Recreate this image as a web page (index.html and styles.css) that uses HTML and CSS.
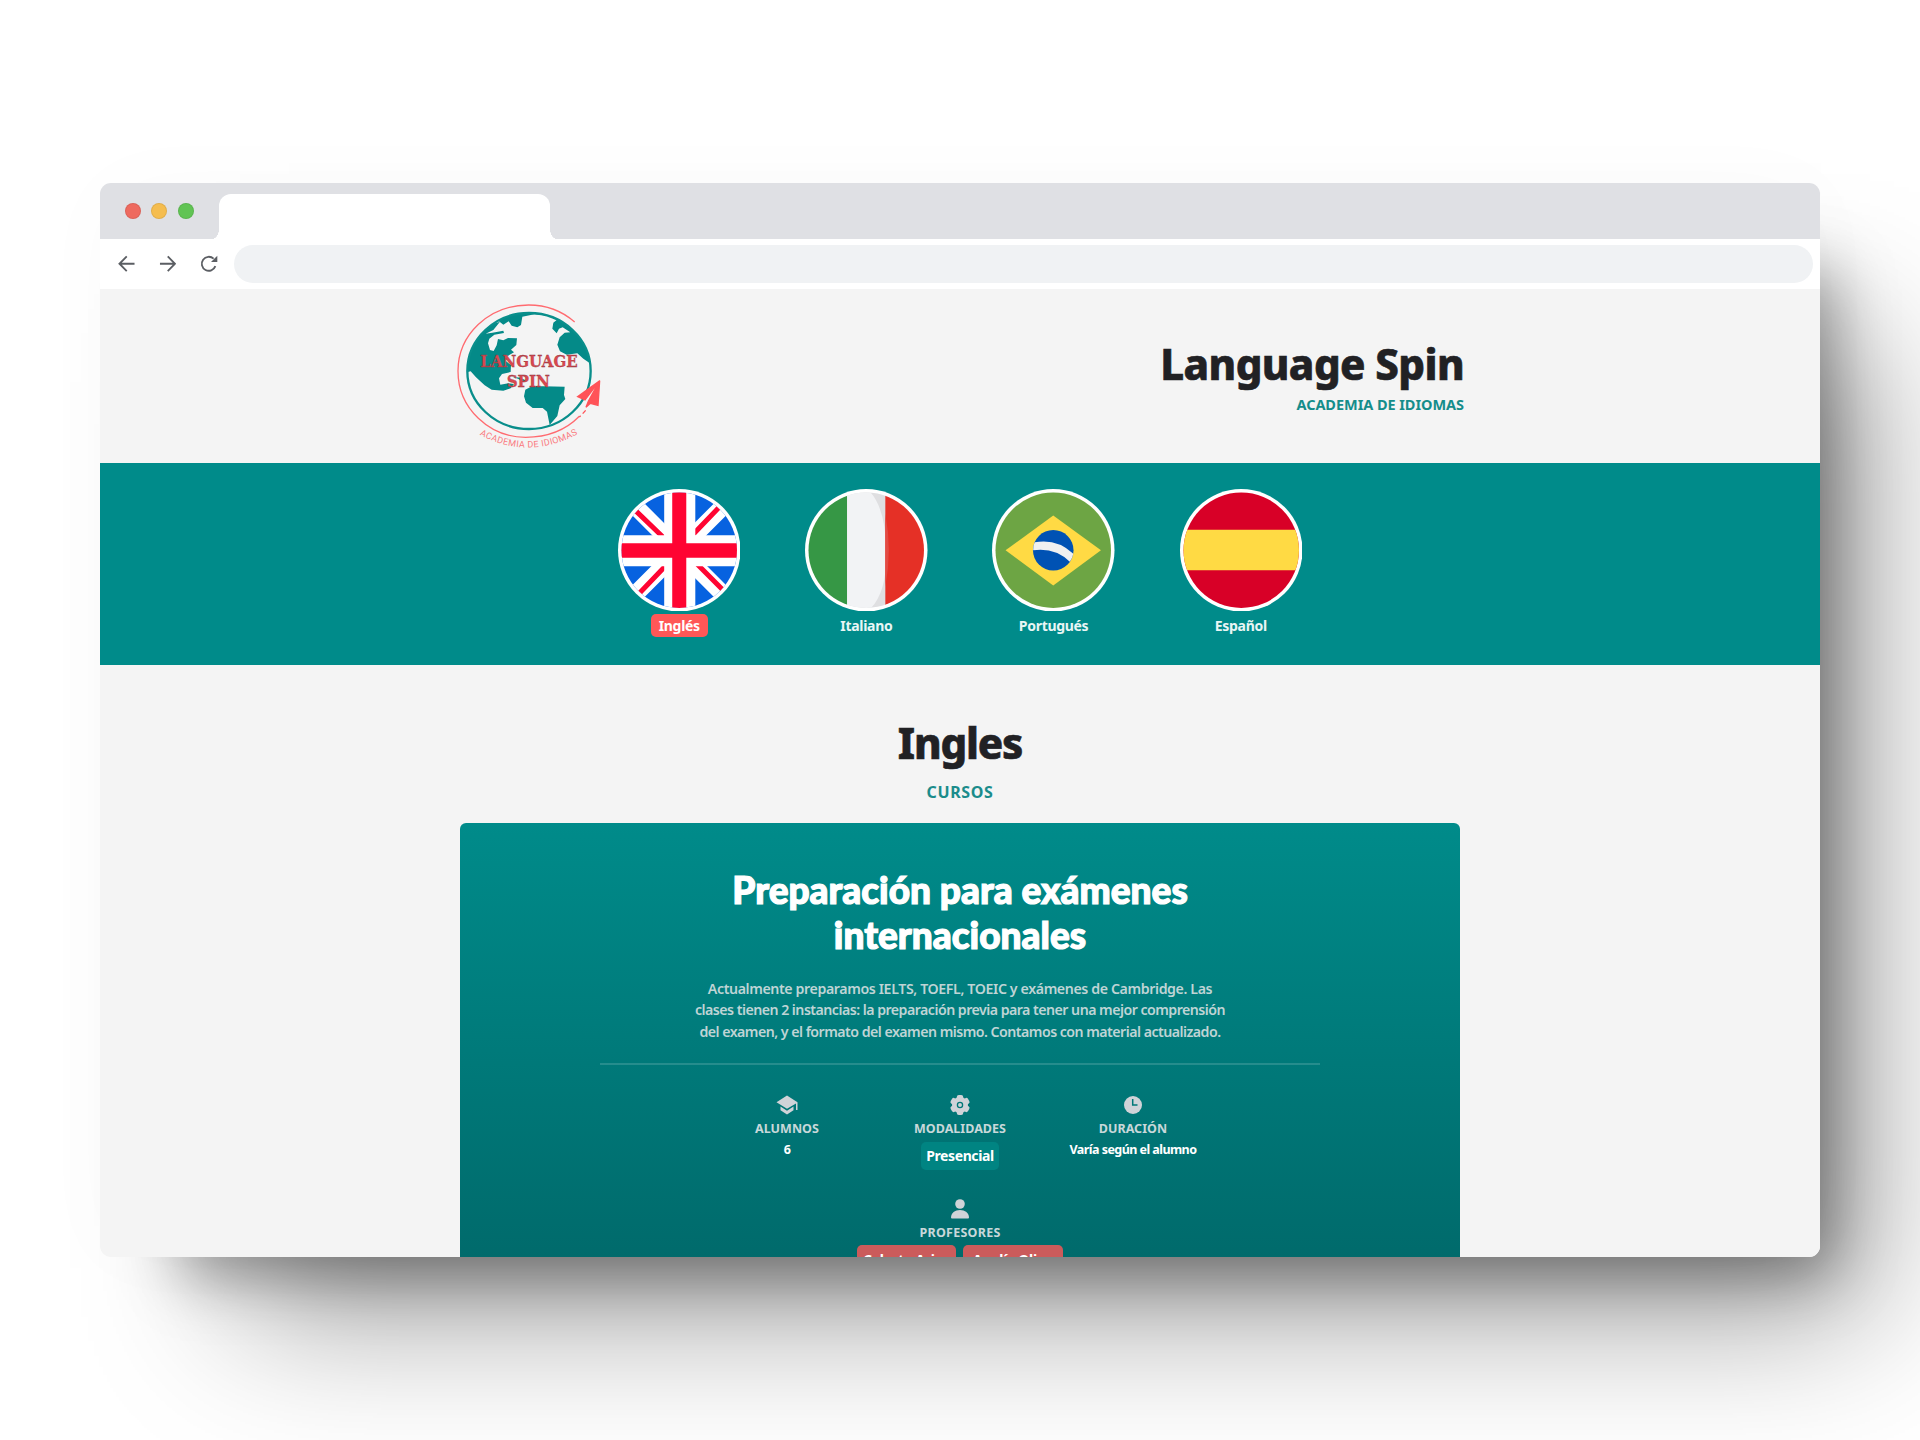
FILE: index.html
```html
<!DOCTYPE html>
<html lang="es">
<head>
<meta charset="utf-8">
<title>Language Spin</title>
<link rel="stylesheet" href="styles.css">
</head>
<body>
<div class="window">
  <div class="tabstrip">
    <div class="lights"><i class="light red"></i><i class="light amber"></i><i class="light green"></i></div>
    <div class="tab"></div>
  </div>
  <div class="toolbar">
    <svg class="tool" viewBox="0 0 18 18"><path d="M17 9H2M9 1.500L1.500 9 9 16.500"/></svg>
    <svg class="tool" viewBox="0 0 18 18"><path d="M1 9h15M9 1.500L16.500 9 9 16.500"/></svg>
    <svg class="tool" viewBox="0 0 18 18"><path d="M15.800 11.500A7.200 7.200 0 1 1 14 3.800"/><path class="solid" d="M17.800 .7v6.500h-6.500z"/></svg>
    <div class="address"></div>
  </div>
  <div class="page">
    <header class="header">
      <svg class="logo" viewBox="0 0 540 510">
        <defs><clipPath id="globe"><ellipse cx="267" cy="243" rx="185" ry="175"/></clipPath></defs>
        <g clip-path="url(#globe)" fill="#048a88">
          <path d="M175 92L238 62 330 64 315 76 283 73 247 80 243 105 232 112 215 107 206 94 190 104z"/>
          <path d="M70 250L83 180 130 110 180 95 160 120 137 131 157 128 190 122 192 129 163 134 148 146 144 160 150 180 161 183 170 166 174 147 190 151 204 144 231 145 229 165 213 179 222 187 203 198 198 213 213 226 212 246 186 252 177 265 181 284 205 280 222 282 212 295 190 302 155 299 134 286 108 262 92 244z"/>
          <path d="M216 260l26 3 20 11-18-2-10-6z"/>
          <path d="M256 299L277 288 374 290 372 315 376 327 359 346 352 378 329 405 321 365 308 354 278 354 258 338 252 319z"/>
          <path d="M330 62L350 90 340 98 337 116 350 130 357 116 368 112 391 127 374 128 359 142 352 164 360 184 380 194 412 190 430 206 450 220 455 190 420 115 360 70z"/>
        </g>
        <ellipse cx="267" cy="243" rx="185" ry="174" fill="none" stroke="#098e8b" stroke-width="7"/>
        <path d="M404 96C365 62 316 45 266 45C145 45 54 135 54 243C54 356 149 442 257 442C323 442 374 424 418 379" fill="none" stroke="#ff6b70" stroke-width="4"/>
        <path d="M479 272L413 320 435 330zM479 272L445 334 438 352 451 340 474 346zM428 371l9-10M418 381l4-4" fill="#ff5358" stroke="#ff5358" stroke-width="4"/>
        <text class="logo-word" x="121" y="231" textLength="292" lengthAdjust="spacingAndGlyphs">LANGUAGE</text>
        <text class="logo-word" x="200" y="291" textLength="130" lengthAdjust="spacingAndGlyphs">SPIN</text>
        <path id="arc" d="M116 433Q264 513 414 432" fill="none"/>
        <text class="logo-arc"><textPath href="#arc" startOffset="3" textLength="308">ACADEMIA DE IDIOMAS</textPath></text>
      </svg>
      <div class="brand">
        <h1 class="heading name">Language Spin</h1>
        <p class="tagline">ACADEMIA DE IDIOMAS</p>
      </div>
    </header>
    <nav class="languages">
      <a class="language">
        <svg class="flag" viewBox="0 0 122 122">
          <defs><clipPath id="disc"><circle cx="61" cy="61" r="57.500"/></clipPath></defs>
          <circle cx="61" cy="61" r="61" fill="#fff"/>
          <g clip-path="url(#disc)">
            <path fill="#0762e0" d="M0 0h122v122H0z"/>
            <path d="M6 6l110 110M116 6L6 116" stroke="#fff" stroke-width="17"/>
            <path d="M18 22L45 48M100 19L73 47M22 103L47 77M77 73l28 28" stroke="#ff0432" stroke-width="5"/>
            <path fill="#fff" d="M46 0h31v122H46zM0 46h122v31H0z"/>
            <path fill="#ff0432" d="M54 0h14v122H54zM0 54h122v14.500H0z"/>
          </g>
        </svg>
        <span class="language-name active">Inglés</span>
      </a>
      <a class="language">
        <svg class="flag" viewBox="0 0 122 122">
          <circle cx="61" cy="61" r="61" fill="#fff"/>
          <g clip-path="url(#disc)">
            <path fill="#369745" d="M0 0h42v122H0z"/><path fill="#dfdfe1" d="M42 0h39v122H42z"/>
            <path fill="#f2f3f5" d="M42 0h20Q80 16 81 61T62 122H42z"/>
            <path fill="#e53026" d="M80 0h42v122H80z"/><path fill="#e34a43" d="M80 25q7 36 0 72z"/>
          </g>
        </svg>
        <span class="language-name">Italiano</span>
      </a>
      <a class="language">
        <svg class="flag" viewBox="0 0 122 122">
          <circle cx="61" cy="61" r="61" fill="#fff"/>
          <circle cx="61" cy="61" r="57.500" fill="#6da544"/>
          <path fill="#ffda44" d="M61 26.500L108.500 61 61 96 13.500 61z"/>
          <circle cx="61" cy="61" r="20.200" fill="#0052b4"/>
          <path fill="#f0f0f0" d="M42.500 53Q65 49 81 64.500Q80 69 77.500 72.500Q63 58 41 61Q41 56 42.500 53z"/>
        </svg>
        <span class="language-name">Portugués</span>
      </a>
      <a class="language">
        <svg class="flag" viewBox="0 0 122 122">
          <circle cx="61" cy="61" r="61" fill="#fff"/>
          <g clip-path="url(#disc)"><path fill="#d80027" d="M0 0h122v122H0z"/><path fill="#ffda44" d="M0 40.500h122V81H0z"/></g>
        </svg>
        <span class="language-name">Español</span>
      </a>
    </nav>
    <main class="main">
      <h2 class="heading course-language">Ingles</h2>
      <p class="section-label">CURSOS</p>
      <article class="card">
        <h3 class="card-title">Preparación para exámenes<br>internacionales</h3>
        <p class="card-text"><span class="lead">Actualmente preparamos IELTS, TOEFL, TOEIC y exámenes de Cambridge. Las</span><br>clases tienen 2 instancias: la preparación previa para tener una mejor comprensión<br>del examen, y el formato del examen mismo. Contamos con material actualizado.</p>
        <div class="rule"></div>
        <div class="facts">
          <div class="fact">
            <svg class="icon" viewBox="0 0 22 22"><path d="M11 1.500L.5 8.200l10.500 6.500L20 9.500V16h1.500V8.200zM4.500 12.600v3.600L11 20.500l6.500-4.300v-3.600L11 16.700z"/></svg>
            <span class="fact-label">ALUMNOS</span><span class="fact-value">6</span>
          </div>
          <div class="fact">
            <svg class="icon" viewBox="0 0 22 22"><rect x="7.800" y="1" width="6.400" height="20" rx="2"/><rect x="7.800" y="1" width="6.400" height="20" rx="2" transform="rotate(60 11 11)"/><rect x="7.800" y="1" width="6.400" height="20" rx="2" transform="rotate(120 11 11)"/><circle cx="11" cy="11" r="8"/><circle cx="11" cy="11" r="2.600" fill="#d0d3d8" stroke="#007777" stroke-width="1.300"/></svg>
            <span class="fact-label">MODALIDADES</span><span class="mode">Presencial</span>
          </div>
          <div class="fact">
            <svg class="icon" viewBox="0 0 22 22"><circle cx="11" cy="11" r="9"/><path d="M10.700 5v6h4.800" fill="none" stroke="#007777" stroke-width="1.500"/></svg>
            <span class="fact-label">DURACIÓN</span><span class="fact-value">Varía según el alumno</span>
          </div>
        </div>
        <div class="fact teachers">
          <svg class="icon" viewBox="0 0 22 22"><circle cx="11" cy="6" r="4.800"/><path d="M2 19.500C2 15 6 12 11 12s9 3 9 7.500q0 1-1 1H3q-1 0-1-1z"/></svg>
          <span class="fact-label spaced">PROFESORES</span>
          <div class="teacher-list"><span class="teacher">Celeste Arias</span><span class="teacher second">Analía Oliva</span></div>
        </div>
      </article>
    </main>
  </div>
</div>
</body>
</html>
```
FILE: styles.css
```css
* { box-sizing: border-box; }
body {
  margin: 0;
  width: 1920px;
  height: 1440px;
  overflow: hidden;
  padding: 182.500px 100px 0;
  background: #fff;
  font-family: "Noto Sans", sans-serif;
  font-weight: 700;
}
h1, h2, h3, p { margin: 0; white-space: nowrap; }
svg { display: block; flex: none; }

.window {
  display: flex;
  flex-direction: column;
  width: 1720px;
  height: 1074.900px;
  border-radius: 11px;
  background: #fff;
  box-shadow:
    47px 53px 56px -33px rgba(0, 0, 0, .34),
    95px 105px 140px -45px rgba(0, 0, 0, .38),
    0 0 90px rgba(0, 0, 0, .02);
}
.tabstrip {
  display: flex;
  align-items: flex-end;
  flex: none;
  height: 56.500px;
  background: #dfe0e4;
  border-radius: 11px 11px 0 0;
  padding-left: 24.500px;
}
.lights { display: flex; gap: 10.600px; width: 94px; padding-bottom: 20.500px; }
.light { width: 16px; height: 16px; border-radius: 50%; border: 1px solid rgba(0, 0, 0, .08); }
.red { background: #ee6a5f; }
.amber { background: #f5bd4f; }
.green { background: #61c454; }
.tab { position: relative; width: 331.500px; height: 45.500px; background: #fff; border-radius: 12px 12px 0 0; }
.tab::before, .tab::after { content: ""; position: absolute; bottom: 0; width: 7px; height: 10px; }
.tab::before { left: -7px; background: radial-gradient(ellipse 7px 10px at 0 0, transparent 98%, #fff); }
.tab::after { right: -7px; background: radial-gradient(ellipse 7px 10px at 100% 0, transparent 98%, #fff); }
.toolbar { display: flex; flex: none; align-items: center; height: 50px; padding: 0 7px 0 17.500px; }
.tool { width: 17.500px; height: 17.500px; margin-right: 23.800px; fill: none; stroke: #5b5e63; stroke-width: 1.900; }
.tool + .tool + .tool { margin-right: 16.400px; }
.solid { fill: #5b5e63; stroke: none; }
.address { flex: 1; height: 38px; border-radius: 19px; background: #f0f2f4; }

.page { flex: 1; min-height: 0; overflow: hidden; border-radius: 0 0 11px 11px; background: #f4f4f4; }
.header { display: flex; justify-content: space-between; height: 174px; padding: 1px 356px 0 340px; }
.logo { width: 180px; height: 170px; }
.logo-word { font: 700 52px "DejaVu Serif", serif; fill: #d9484f; stroke: #8b3740; stroke-width: .8; }
.logo-arc { font: 400 27px Roboto, sans-serif; fill: #fa7b80; }
.brand { padding-top: 49px; text-align: right; }
.heading { font-size: 42px; line-height: 50px; font-weight: 800; color: #212124; -webkit-text-stroke: .6px #212124; stroke-linejoin: round; }
.name { letter-spacing: -.6px; }
.course-language { letter-spacing: -1.200px; }
.tagline { margin-top: 5px; font-size: 14.500px; line-height: 20px; color: #158d8b; letter-spacing: -.05px; }

.languages { display: flex; justify-content: center; gap: 65px; height: 202px; padding-top: 25.500px; background: #008b8a; }
.language { display: flex; flex-direction: column; align-items: center; width: 122.200px; }
.flag { width: 122.500px; height: 122.500px; }
.language-name { margin-top: 3px; padding: 1px 8px 0; border-radius: 5px; font-size: 14px; line-height: 22px; color: #e9f6f5; letter-spacing: -.3px; }
.active { background: #ff5757; color: #fff; }

.main { display: flex; flex-direction: column; align-items: center; padding-top: 53px; }
.section-label { margin-top: 12px; font-size: 16px; line-height: 24px; color: #1b8c8b; letter-spacing: .6px; }
.card {
  display: flex;
  flex-direction: column;
  align-items: center;
  width: 1000px;
  height: 640px;
  margin-top: 19px;
  padding-top: 43.500px;
  border-radius: 6px;
  background: linear-gradient(#008b8a, #006a6b 440px);
  color: #fff;
  text-align: center;
}
.card-title { font-family: Lato, sans-serif; font-weight: 900; font-size: 37px; line-height: 45px; letter-spacing: 0; -webkit-text-stroke: 1.200px #fff; }
.card-text { margin-top: 21px; font-size: 14.200px; line-height: 21.800px; font-weight: 600; color: #bfd4d5; letter-spacing: -.53px; }
.lead { letter-spacing: -.39px; }
.rule { width: 720px; height: 2px; margin-top: 20.600px; background: rgba(255, 255, 255, .15); }
.facts { display: grid; grid-template-columns: repeat(3, 173px); margin-top: 28.500px; }
.fact { display: flex; flex-direction: column; align-items: center; white-space: nowrap; }
.icon { width: 22px; height: 22px; fill: #d0d3d8; }
.fact-label { margin-top: 4px; font-size: 12.500px; line-height: 18px; font-weight: 700; color: #c8d8da; letter-spacing: .03px; }
.spaced { letter-spacing: .25px; }
.fact-value { margin-top: 3.500px; font-size: 12.500px; line-height: 18px; letter-spacing: -.55px; }
.mode { margin-top: 4px; padding: 0 5px; border-radius: 5px; background: #008482; font-size: 14px; line-height: 28px; letter-spacing: -.4px; }
.teachers { margin-top: 28.500px; }
.teacher-list { display: flex; gap: 7px; margin-top: 3px; }
.teacher { width: 98.500px; height: 28px; padding-top: .5px; border-radius: 5px; background: #cb5b5b; font-size: 14px; line-height: 28px; letter-spacing: -.3px; }
.second { width: 100.500px; }
```
